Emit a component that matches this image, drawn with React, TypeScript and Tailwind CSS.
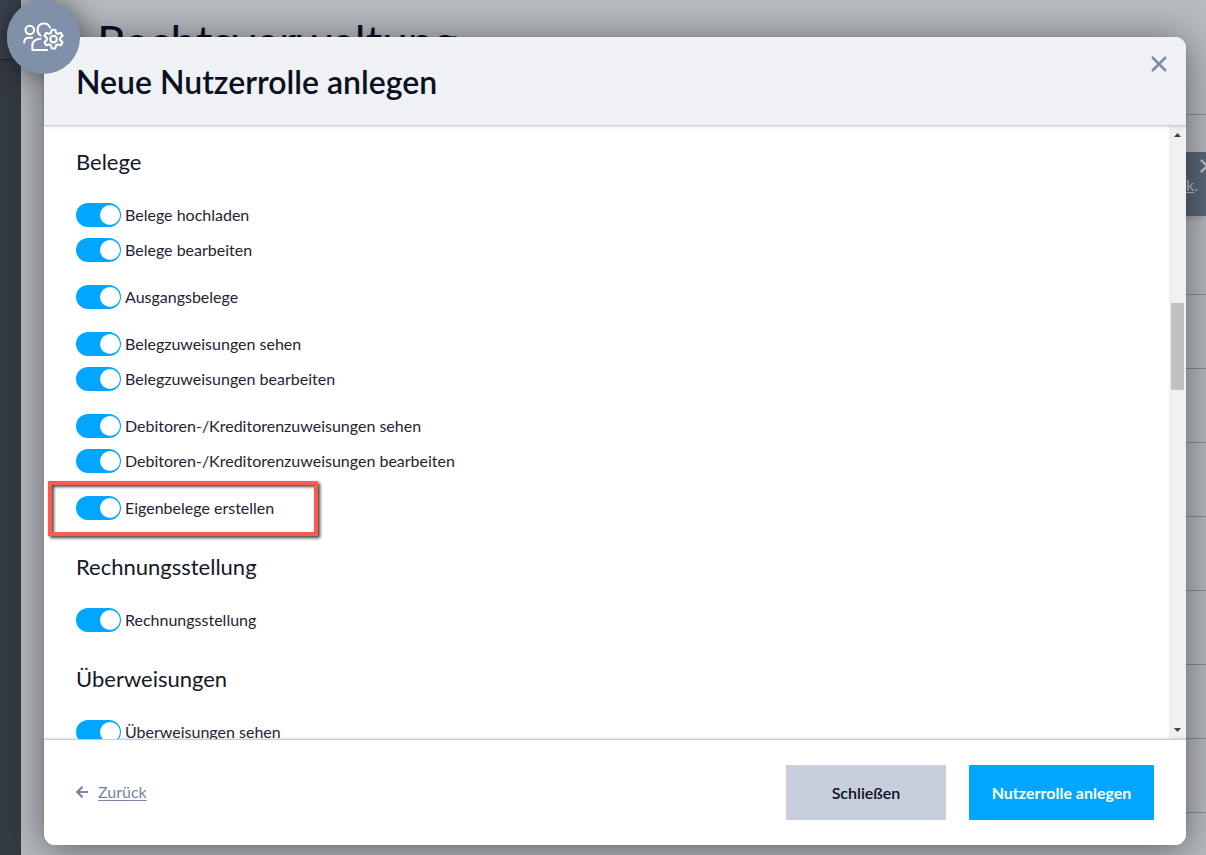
const sections = [
  {
    title: 'Belege',
    groups: [
      ['Belege hochladen', 'Belege bearbeiten'],
      ['Ausgangsbelege'],
      ['Belegzuweisungen sehen', 'Belegzuweisungen bearbeiten'],
      ['Debitoren-/Kreditorenzuweisungen sehen', 'Debitoren-/Kreditorenzuweisungen bearbeiten'],
      ['Eigenbelege erstellen'],
    ],
  },
  { title: 'Rechnungsstellung', groups: [['Rechnungsstellung']] },
  { title: 'Überweisungen', groups: [['Überweisungen sehen']] },
];

function Toggle({ label, highlighted }: { label: string; highlighted: boolean }) {
  return (
    <label className="relative flex h-6 w-fit items-center gap-1 text-base text-[#1e2434]">
      <input type="checkbox" defaultChecked className="peer sr-only" />
      <span className="flex h-6 w-[45px] shrink-0 items-center rounded-full bg-gray-400 p-px peer-checked:justify-end peer-checked:bg-[#00a6ff]">
        <span className="size-5 rounded-full bg-white" />
      </span>
      <span className="whitespace-nowrap">{label}</span>
      {highlighted && (
        <span className="pointer-events-none absolute -top-[15px] -left-7 h-[55px] w-[270px] border-4 border-[#ff5a4a] shadow-[2px_2px_3px_rgba(0,0,0,0.75),inset_2px_2px_3px_rgba(0,0,0,0.7)]" />
      )}
    </label>
  );
}

function UsersGearIcon() {
  return (
    <svg viewBox="0 0 42 30" className="h-[30px] w-[42px]" fill="none" stroke="#fff" strokeWidth="2.1" strokeLinecap="round" strokeLinejoin="round">
      <circle cx="6.800" cy="8" r="4.300" />
      <path d="M1.200 20.500C1.200 17.500 3 15.800 6 15.800H9" />
      <path d="M17.500 13.500C13 10 13.500 2 20.500 1.500C23.500 1.400 26 2.800 26.900 5.500" />
      <path d="M17.500 16.800C12 17 9.400 20 9.400 24V28H24" />
      <path d="M28.800 7.700h3.400l.8 3.100 1.700 1 3.100-.9 1.700 2.900-2.300 2.300v2l2.300 2.300-1.700 2.900-3.100-.9-1.700 1-.8 3.100h-3.400l-.8-3.100-1.700-1-3.100.9-1.700-2.900 2.300-2.300v-2l-2.300-2.300 1.700-2.900 3.100.9 1.700-1z" />
      <circle cx="30.500" cy="17.100" r="3.300" />
    </svg>
  );
}

function CrossIcon({ className }: { className: string }) {
  return (
    <svg viewBox="0 0 16 16" className={className} fill="none" stroke="currentColor" strokeWidth="2.500" aria-hidden="true">
      <path d="M1 1L15 15M15 1L1 15" />
    </svg>
  );
}

function Backdrop() {
  return (
    <div className="flex h-screen overflow-hidden bg-[#b8bcc1]" aria-hidden="true">
      <div className="w-[21px] shrink-0 bg-[#333a44]">
        <div className="h-[60px] border-b border-[#20252e] bg-[#3a424e]" />
      </div>
      <div className="min-w-0 flex-1 pl-[76px]">
        <div className="h-[115px] border-b border-[#87909f] pt-4">
          <p className="text-[46px] leading-[52px] text-[#0a1022]">Rechtsverwaltung</p>
        </div>
        <div className="mt-[37px] flex h-16 flex-col items-end overflow-hidden bg-[#5c6879] text-[#c0c5cb] shadow-md">
          <CrossIcon className="mt-[7px] -mr-2 size-3.5 shrink-0" />
          <p className="mr-2 text-base leading-6"><span className="underline">Zurück</span>.</p>
        </div>
        <div className="h-[79px] border-b border-[#87909f]" />
        {[0, 1, 2, 3, 4, 5, 6].map((row) => (
          <div key={row} className="h-[74px] border-b border-[#87909f]" />
        ))}
      </div>
    </div>
  );
}

function ScrollTrack() {
  return (
    <div className="flex w-[17px] shrink-0 flex-col items-center bg-[#f0f0f0]" aria-hidden="true">
      <svg viewBox="0 0 17 17" className="size-[17px] shrink-0" fill="#404040"><path d="M5 11L8.500 7L12 11z" /></svg>
      <div className="flex w-full flex-1 flex-col items-center">
        <div className="grow-[160]" />
        <div className="h-[87px] w-[13px] bg-[#c1c1c1]" />
        <div className="grow-[332]" />
      </div>
      <svg viewBox="0 0 17 17" className="size-[17px] shrink-0" fill="#404040"><path d="M5 6L8.500 10L12 6z" /></svg>
    </div>
  );
}

export default function App() {
  return (
    <div className="relative font-['Lato',sans-serif]">
      <Backdrop />
      <div className="absolute inset-0 flex pt-[37px] pr-5 pb-2.5 pl-11">
        <div role="dialog" aria-labelledby="dialog-title" className="relative flex min-w-0 flex-1 flex-col rounded-[11px] bg-white shadow-[0_4px_40px_rgba(0,0,0,0.5)]">
          <div className="absolute -top-[37px] -left-[37px] h-[74px] w-[73px] rounded-full bg-[#8090a8] shadow-[0_0_28px_rgba(0,0,0,0.5)]" />
          <header className="relative flex h-[89px] shrink-0 items-start justify-between rounded-t-[11px] border-b border-[#c5cedb] bg-[#f0f1f5] pr-[19px] pl-8 shadow-[0_1px_3px_rgba(0,0,0,0.12)]">
            <h1 id="dialog-title" className="mt-[25px] text-[32px] leading-10 font-semibold text-[#0a1022]">Neue Nutzerrolle anlegen</h1>
            <button type="button" aria-label="Dialog schließen" className="mt-[19px] text-[#7b8ca6]">
              <CrossIcon className="size-4" />
            </button>
          </header>
          <div className="absolute -top-[37px] -left-[37px] flex h-[74px] w-[73px] items-center justify-center rounded-full bg-[#8090a8]">
            <UsersGearIcon />
          </div>
          <div className="flex min-h-0 flex-1">
            <div className="min-w-0 flex-1 overflow-hidden pt-5 pl-8">
              {sections.map((section) => (
                <section key={section.title} className="mb-[31px]">
                  <h2 className="mb-[25px] text-[22px] leading-8 text-[#131929]">{section.title}</h2>
                  <div className="flex flex-col gap-[23px]">
                    {section.groups.map((group) => (
                      <div key={group[0]} className="flex flex-col gap-[11px]">
                        {group.map((label) => (
                          <Toggle key={label} label={label} highlighted={label === 'Eigenbelege erstellen'} />
                        ))}
                      </div>
                    ))}
                  </div>
                </section>
              ))}
            </div>
            <ScrollTrack />
          </div>
          <footer className="flex h-[106px] shrink-0 items-center justify-between rounded-b-[11px] border-t border-[#c5cedb] bg-white px-8 shadow-[0_-1px_3px_rgba(0,0,0,0.12)]">
            <a href="#" className="flex items-center gap-2.5 pb-0.5 text-base text-[#74859c]">
              <svg viewBox="0 0 12 12" className="size-3" fill="none" stroke="currentColor" strokeWidth="2.200" aria-hidden="true">
                <path d="M12 6H1.500M6.500 .8L1.300 6L6.500 11.200" />
              </svg>
              <span className="underline underline-offset-2">Zurück</span>
            </a>
            <div className="flex gap-[23px]">
              <button type="button" className="h-[55px] w-40 rounded-[1px] bg-[#c8cedb] text-base font-semibold text-[#0a1022]">Schließen</button>
              <button type="button" className="h-[55px] w-[185px] rounded-[1px] bg-[#00a6ff] text-base font-bold text-white">Nutzerrolle anlegen</button>
            </div>
          </footer>
        </div>
      </div>
    </div>
  );
}
